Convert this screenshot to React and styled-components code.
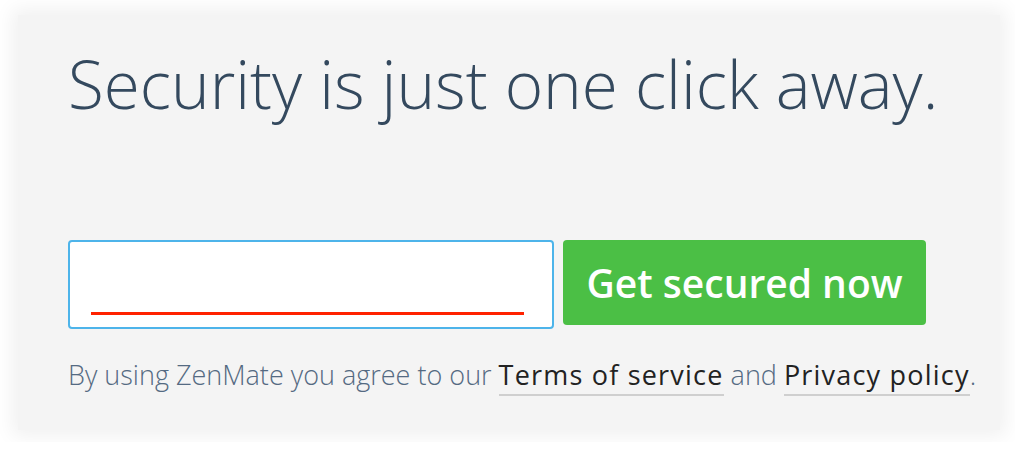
import React from 'react';
import styled, { createGlobalStyle } from 'styled-components';

const Global = createGlobalStyle`
  body {
    margin: 0;
    background: #ffffff;
    font-family: 'Open Sans', 'Liberation Sans', sans-serif;
  }
`;

const Panel = styled.div`
  margin: 15px 15px 12px 18px;
  padding: 24px 50px 36px 50px;
  background: #f4f4f4;
  box-shadow: 0 0 18px 6px rgba(0, 0, 0, 0.06);
`;

const Heading = styled.h1`
  margin: 0;
  font-family: 'Open Sans', sans-serif;
  font-weight: 300;
  font-size: 65.6px;
  line-height: 90px;
  color: #34495e;
`;

const Row = styled.div`
  display: flex;
  align-items: flex-start;
  gap: 9px;
  margin-top: 111px;
`;

const InputBox = styled.div`
  box-sizing: border-box;
  width: 486px;
  height: 89px;
  background: #ffffff;
  border: 2px solid #4db4ea;
  border-radius: 4px;
  padding: 70px 28px 0 21px;
`;

const Squiggle = styled.div`
  height: 3px;
  background: #ff2200;
`;

const Button = styled.button`
  box-sizing: border-box;
  width: 363px;
  height: 85px;
  border: none;
  border-radius: 4px;
  background: #4bbf45;
  color: #ffffff;
  font-family: 'Open Sans', sans-serif;
  font-weight: 600;
  font-size: 39px;
  padding: 0;
  cursor: pointer;
`;

const Note = styled.p`
  margin: 27px 0 0 0;
  font-family: 'Open Sans', sans-serif;
  font-weight: 300;
  font-size: 27px;
  line-height: 38px;
  color: #546a82;
  white-space: nowrap;
`;

const Link = styled.a`
  color: #222222;
  font-weight: 400;
  letter-spacing: 1.2px;
  text-decoration: none;
  border-bottom: 2px solid #cfcfcf;
  padding-bottom: 1px;
`;

export default function App() {
  return (
    <>
      <Global />
      <Panel>
        <Heading>Security is just one click away.</Heading>
        <Row>
          <InputBox>
            <Squiggle />
          </InputBox>
          <Button>Get secured now</Button>
        </Row>
        <Note>
          By using ZenMate you agree to our <Link href="#">Terms of service</Link> and{' '}
          <Link href="#">Privacy policy</Link>.
        </Note>
      </Panel>
    </>
  );
}
